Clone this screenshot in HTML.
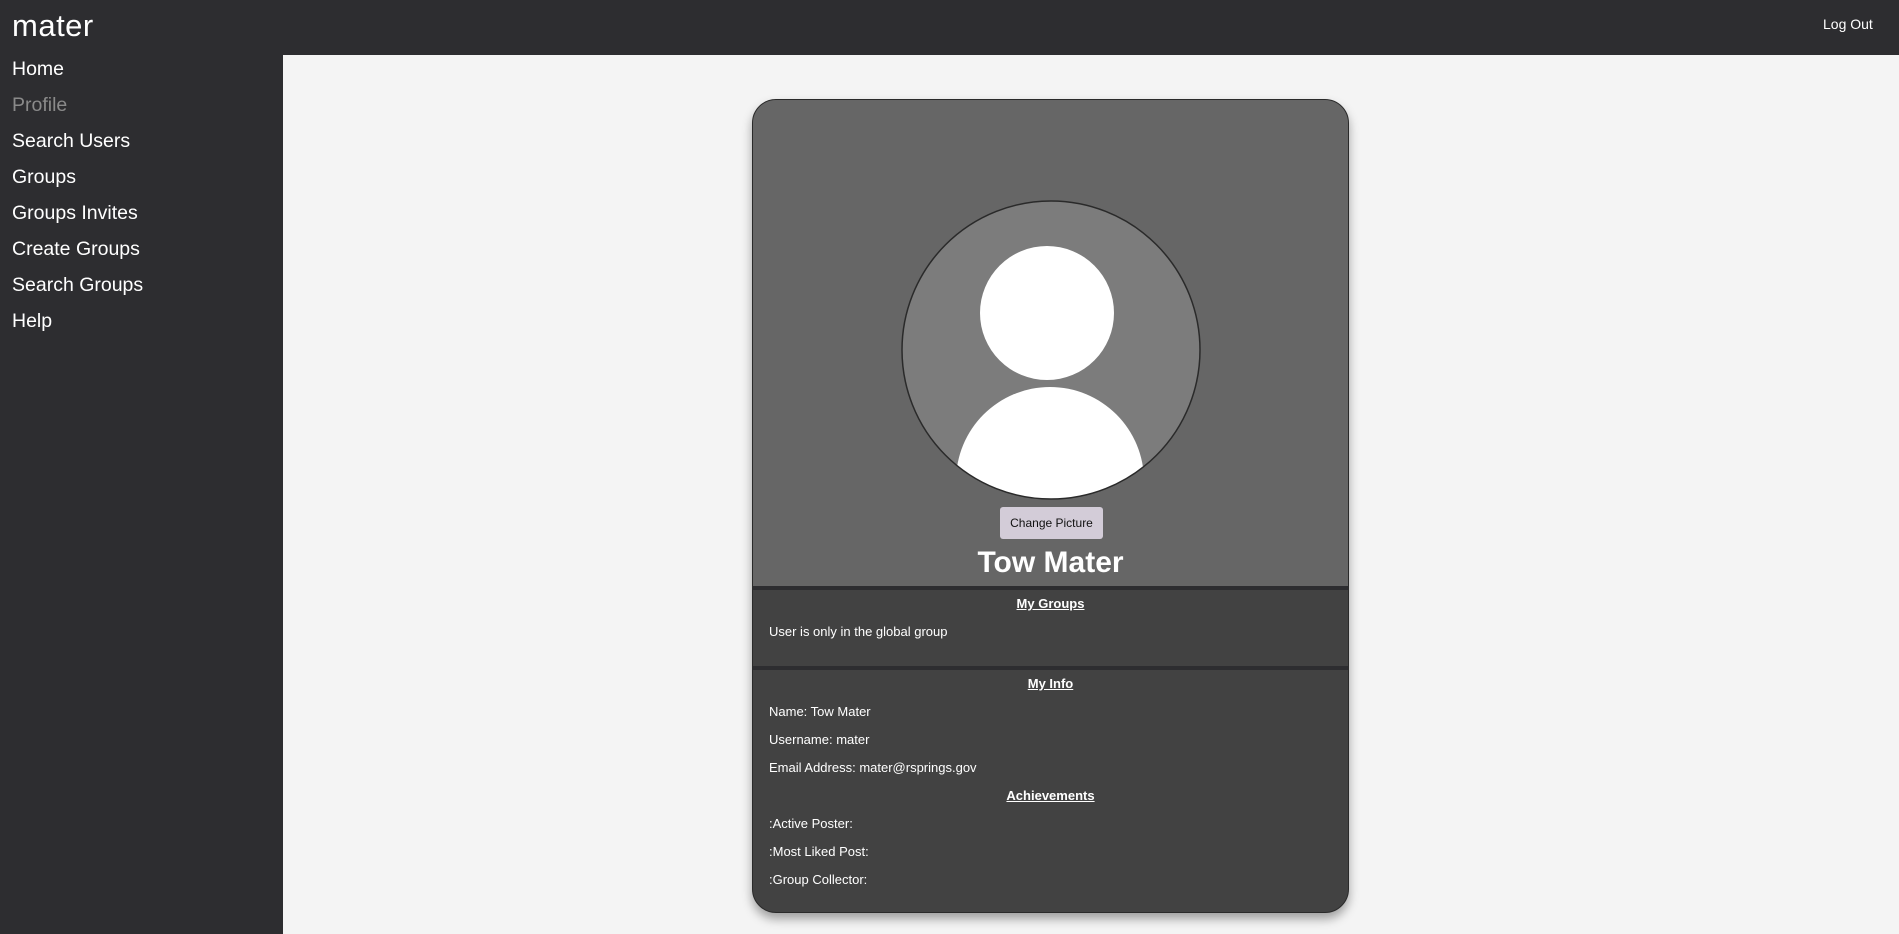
<!DOCTYPE html>
<html><head><meta charset="utf-8"><style>
*{margin:0;padding:0;box-sizing:border-box}
body{width:1899px;height:934px;background:#f4f4f4;font-family:"Liberation Sans",sans-serif;position:relative;overflow:hidden}
.top{position:absolute;left:0;top:0;width:1899px;height:55px;background:#2d2d30}
.logo{position:absolute;left:12px;top:8px;font-size:31px;color:#fff;letter-spacing:0.5px}
.logout{position:absolute;left:1823px;top:16px;font-size:14px;color:#fff}
.side{position:absolute;left:0;top:55px;width:283px;height:879px;background:#2d2d30}
.side div{position:absolute;left:12px;font-size:19.5px;color:#fff}
.card{position:absolute;left:752px;top:99px;width:597px;height:814px;border:1px solid #2a2a2a;border-radius:24px;overflow:hidden;background:#424242;box-shadow:0 6px 10px rgba(0,0,0,0.35)}
.topsec{position:absolute;left:0;top:0;width:100%;height:486px;background:#666}
.div{position:absolute;left:0;width:100%;height:4px;background:#2d2d30}
.btn{position:absolute;left:247px;top:407px;width:103px;height:32px;background:#d3ccd8;border-radius:3px;font-size:12px;color:#111;text-align:center;line-height:32px;white-space:nowrap}
.name{position:absolute;left:0;width:100%;top:545px;margin-top:-99px;text-align:center;font-size:30px;font-weight:bold;color:#fff}
.h{position:absolute;left:0;width:100%;text-align:center;font-size:13px;font-weight:bold;color:#fff;text-decoration:underline}
.t{position:absolute;left:16px;font-size:13px;color:#fff}
</style></head><body>
<div class="top"><div class="logo">mater</div><div class="logout">Log Out</div></div>
<div class="side">
<div style="top:3px">Home</div>
<div style="top:39px;color:#8a8a8a">Profile</div>
<div style="top:75px">Search Users</div>
<div style="top:111px">Groups</div>
<div style="top:147px">Groups Invites</div>
<div style="top:183px">Create Groups</div>
<div style="top:219px">Search Groups</div>
<div style="top:255px">Help</div>
</div>
<div class="card">
<div class="topsec"></div>
<svg style="position:absolute;left:0;top:0" width="597" height="486">
<defs><clipPath id="c"><circle cx="298" cy="250" r="149"/></clipPath></defs>
<circle cx="298" cy="250" r="149" fill="#7c7c7c"/>
<g clip-path="url(#c)">
<circle cx="294" cy="213" r="67" fill="#fff"/>
<circle cx="297" cy="381" r="94" fill="#fff"/>
</g>
<circle cx="298" cy="250" r="149" fill="none" stroke="#2a2a2a" stroke-width="1.5"/>
</svg>
<div class="btn">Change Picture</div>
<div class="name">Tow Mater</div>
<div class="div" style="top:486px"></div>
<div class="h" style="top:496px">My Groups</div>
<div class="t" style="top:524px">User is only in the global group</div>
<div class="div" style="top:566px"></div>
<div class="h" style="top:576px">My Info</div>
<div class="t" style="top:604px">Name: Tow Mater</div>
<div class="t" style="top:632px">Username: mater</div>
<div class="t" style="top:660px">Email Address: mater@rsprings.gov</div>
<div class="h" style="top:688px">Achievements</div>
<div class="t" style="top:716px">:Active Poster:</div>
<div class="t" style="top:744px">:Most Liked Post:</div>
<div class="t" style="top:772px">:Group Collector:</div>
</div>
</body></html>
